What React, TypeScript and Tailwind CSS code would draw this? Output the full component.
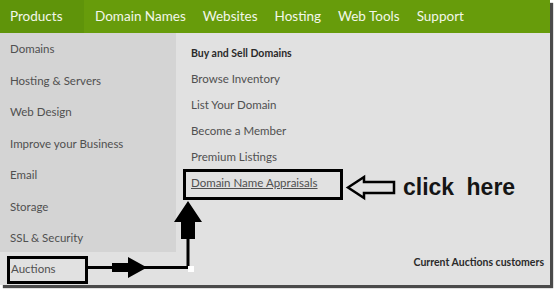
import React from 'react'

const navItems = ['Domain Names', 'Websites', 'Hosting', 'Web Tools', 'Support']

const sideItems = [
  'Domains',
  'Hosting & Servers',
  'Web Design',
  'Improve your Business',
  'Email',
  'Storage',
  'SSL & Security',
]

const links = ['Browse Inventory', 'List Your Domain', 'Become a Member', 'Premium Listings']

const font = { fontFamily: 'Lato, "Open Sans", sans-serif' }

function Annotations() {
  return (
    <>
      <svg className="absolute inset-0 pointer-events-none" width="550" height="285" viewBox="0 0 550 285">
        {/* Auctions box */}
        <rect x="8.5" y="257.5" width="78" height="25" fill="none" stroke="#000" strokeWidth="3" />
        {/* Appraisals box */}
        <rect x="184.5" y="170.5" width="157" height="28" fill="none" stroke="#000" strokeWidth="3" />
        {/* connector */}
        <path d="M87 267.5 H188 V225" fill="none" stroke="#000" strokeWidth="3" />
        {/* right arrow */}
        <path d="M112 263 H128 V257 L147 267.5 L128 278 V272 H112 Z" fill="#000" />
        {/* up arrow */}
        <path d="M181 239 V222 H174 L188 201 L202 222 H195 V239 Z" fill="#000" />
        <rect x="188" y="266" width="6" height="6" fill="#fff" />
        {/* left outline arrow */}
        <path d="M348 187.5 L364 177 V182 H394 V193 H364 V198 Z" fill="none" stroke="#000" strokeWidth="2.5" />
      </svg>
      <div
        className="absolute left-[403px] top-[174px] text-[23px] leading-[26px] font-bold text-[#151515]"
        style={{ fontFamily: '"Liberation Sans", Arial, sans-serif', wordSpacing: '6px' }}
      >
        click here
      </div>
    </>
  )
}

export default function App() {
  return (
    <div className="w-[554px] h-[289px] bg-white">
      <div
        className="relative w-[550px] h-[285px] bg-[#e1e1e1] shadow-[3px_3px_1px_#4a4a4a] flex flex-col"
        style={font}
      >
        <div className="h-[33px] bg-[#679c0b] flex items-center text-[13.5px] text-[#f3f7ea]">
          <div className="h-full w-[84px] bg-[#5f940a] flex items-center pl-[10px]">Products</div>
          <div className="flex gap-[17px] pl-[11px]">
            {navItems.map((n) => (
              <span key={n}>{n}</span>
            ))}
          </div>
        </div>

        <div className="flex flex-1">
          <div className="w-[176px] flex flex-col">
            <div className="bg-[#d4d4d4] h-[219px] flex flex-col pl-[10px]">
              {sideItems.map((s) => (
                <div key={s} className="h-[31.5px] shrink-0 flex items-center text-[11.5px] text-[#505050]">
                  {s}
                </div>
              ))}
            </div>
            <div className="h-[33px] flex items-center pl-[11px] text-[11.5px] text-[#505050]">Auctions</div>
          </div>

          <div className="flex-1 flex flex-col pl-[15px] pt-[12px] pr-[6px] pb-[14px]">
            <div className="text-[10.5px] font-bold text-[#2a2a2a] h-[18px] flex items-center">Buy and Sell Domains</div>
            <div className="flex flex-col mt-[3px]">
              {links.map((l) => (
                <div key={l} className="h-[26px] flex items-center text-[11.5px] text-[#505050]">
                  {l}
                </div>
              ))}
              <div className="h-[26px] flex items-center text-[11.5px] text-[#505050]">
                <span className="underline">Domain Name Appraisals</span>
              </div>
            </div>
            <div className="mt-auto self-end text-[10.5px] font-bold text-[#2a2a2a]">Current Auctions customers</div>
          </div>
        </div>

        <Annotations />
      </div>
    </div>
  )
}
